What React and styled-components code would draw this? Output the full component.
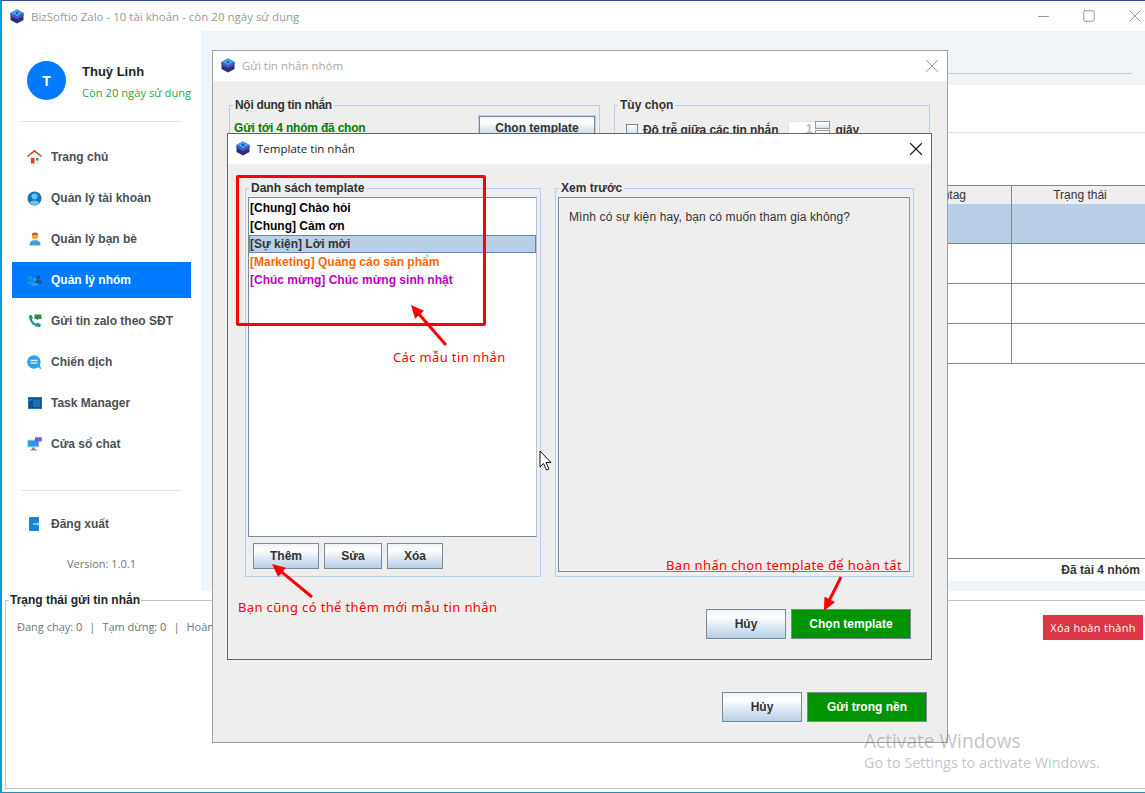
import React from 'react';
import styled, { createGlobalStyle } from 'styled-components';
import { X, Minus, Square } from 'lucide-react';

const GlobalStyle = createGlobalStyle`
  * { box-sizing: border-box; }
  html, body { margin: 0; padding: 0; background: #fff; }
  body { font-family: "Liberation Sans", Arial, sans-serif; font-size: 12px; color: #333; }
`;

const Frame = styled.div`
  position: relative;
  width: 1145px;
  height: 793px;
  overflow: hidden;
  display: flex;
  flex-direction: column;
  background: #fff;
  border-left: 2px solid #0a9be0;
  border-top: 1px solid #2b4f8f;
  border-bottom: 1px solid #2a8fa8;
`;

const TitleBar = styled.div`
  height: 30px;
  display: flex;
  align-items: center;
  padding-left: 8px;
  gap: 7px;
  flex-shrink: 0;
`;

const TitleText = styled.span`
  font-family: "Open Sans", sans-serif;
  font-size: 11.5px;
  color: ${p => p.$color || '#999'};
`;

const WindowControls = styled.div`
  margin-left: auto;
  margin-right: -13px;
  display: flex;
  align-items: center;
  color: #999;
`;

const ControlButton = styled.span`
  width: 46px;
  display: flex;
  justify-content: center;
`;

const Body = styled.div`
  height: 560px;
  display: flex;
  flex-shrink: 0;
`;

const Sidebar = styled.aside`
  width: 199px;
  flex-shrink: 0;
  display: flex;
  flex-direction: column;
  padding: 30px 10px 0 10px;
`;

const Profile = styled.div`
  display: flex;
  align-items: center;
  gap: 16px;
  padding-left: 15px;
  height: 39px;
`;

const Avatar = styled.div`
  width: 39px;
  height: 39px;
  border-radius: 50%;
  flex-shrink: 0;
  background: #007bff;
  color: #fff;
  font-weight: bold;
  font-size: 14px;
  display: flex;
  align-items: center;
  justify-content: center;
`;

const ProfileInfo = styled.div`
  display: flex;
  flex-direction: column;
  gap: 6px;
  padding-top: 3px;
`;

const ProfileName = styled.div`
  font-weight: bold;
  font-size: 13px;
  color: #212529;
`;

const ProfileNote = styled.div`
  font-family: "Open Sans", sans-serif;
  font-size: 11.2px;
  white-space: nowrap;
  color: #28a745;
`;

const Divider = styled.div`
  height: 1px;
  flex-shrink: 0;
  background: #e0e0e0;
  margin: ${p => p.$margin};
`;

const NavList = styled.nav`
  display: flex;
  flex-direction: column;
  gap: 5px;
`;

const NavItem = styled.div`
  height: 36px;
  flex-shrink: 0;
  display: flex;
  align-items: center;
  gap: 9px;
  padding-left: 15px;
  font-weight: bold;
  font-size: 12px;
  color: ${p => (p.$active ? '#fff' : '#495057')};
  background: ${p => (p.$active ? '#007bff' : 'transparent')};
`;

const IconSlot = styled.span`
  width: 15px;
  height: 16px;
  display: flex;
  align-items: center;
  justify-content: center;
  flex-shrink: 0;
`;

const Version = styled.div`
  margin-top: 14px;
  text-align: center;
  font-family: "Open Sans", sans-serif;
  font-size: 11px;
  color: #6c757d;
`;

const Content = styled.main`
  flex: 1;
  display: flex;
  flex-direction: column;
  background: #eff5f9;
`;

const TopStrip = styled.div`
  height: 54px;
  flex-shrink: 0;
  padding: 42px 13px 0 14px;
`;

const StripLine = styled.div`
  height: 1px;
  background: #c8c8c8;
`;

const ListPanel = styled.div`
  flex: 1;
  margin-left: 14px;
  display: flex;
  flex-direction: column;
  background: #fff;
`;

const Toolbar = styled.div`
  height: 48px;
  flex-shrink: 0;
  border-bottom: 1px solid #e0e0e0;
`;

const GroupTable = styled.div`
  display: grid;
  grid-template-columns: 797px 1fr;
  grid-auto-rows: 40px;
`;

const TableHead = styled(GroupTable)`
  margin-top: 52px;
  grid-auto-rows: 20px;
`;

const TableBody = styled(GroupTable)`
  margin-top: -1px;
`;

const HeaderCell = styled.div`
  height: 20px;
  background: #eee;
  border-top: 1px solid #7a8a99;
  border-bottom: 1px solid #7a8a99;
  border-right: ${p => (p.$last ? 'none' : '1px solid #7a8a99')};
  text-align: ${p => (p.$last ? 'center' : 'right')};
  padding: ${p => (p.$last ? '0 0 0 3px' : '0 45px 0 0')};
  line-height: 19px;
  color: #333;
`;

const BodyCell = styled.div`
  background: ${p => (p.$selected ? '#b8cfe5' : '#fff')};
  border-bottom: 1px solid #7a8a99;
  border-right: ${p => (p.$last ? 'none' : '1px solid #7a8a99')};
`;

const TableRow = styled.div`
  display: contents;
`;

const StatusRow = styled.div`
  margin-top: auto;
  height: 23px;
  border-top: 1px solid #7a8a99;
  display: flex;
  align-items: center;
  justify-content: flex-end;
  padding-right: 5px;
  font-weight: bold;
  color: #333;
`;

const BottomStrip = styled.div`
  height: 10px;
  flex-shrink: 0;
  background: #eff5f9;
`;

const StatusPanel = styled.fieldset`
  flex: 1;
  margin: 2px 0 3px 3px;
  padding: 7px 0 0 0;
  min-width: 0;
  border: 1px solid #c4c4c4;
  border-right: none;
  display: flex;
  flex-direction: column;
`;

const PanelLegend = styled.legend`
  padding: 0 1px;
  margin-left: 3px;
  font-weight: bold;
  font-size: 12px;
  line-height: 14px;
  color: #212529;
`;

const StatusLine = styled.div`
  display: flex;
  align-items: flex-start;
  padding: 0 2px 0 11px;
  font-family: "Open Sans", sans-serif;
  font-size: 11px;
  color: #6c757d;
`;

const StatusCounts = styled.span`
  padding-top: 5px;
  display: flex;
  gap: 7px;
`;

const DangerButton = styled.button`
  margin-left: auto;
  width: 100px;
  height: 25px;
  margin-top: 1px;
  border: none;
  background: #dc3545;
  color: #fff;
  font-family: "Open Sans", sans-serif;
  font-size: 11px;
  letter-spacing: 0.3px;
`;

const DialogWindow = styled.section`
  position: absolute;
  left: ${p => p.$left}px;
  top: ${p => p.$top}px;
  width: ${p => p.$width}px;
  height: ${p => p.$height}px;
  display: flex;
  flex-direction: column;
  background: #eee;
  border: 1px solid ${p => (p.$active ? '#666' : '#a0a0a0')};
`;

const DialogHeader = styled.header`
  height: 30px;
  flex-shrink: 0;
  background: #fff;
  display: flex;
  align-items: center;
  gap: 7px;
  padding: 0 4px 1px 8px;
`;

const CloseSlot = styled.span`
  margin-left: auto;
  display: flex;
  color: ${p => (p.$active ? '#222' : '#999')};
`;

const OuterGroups = styled.div`
  display: grid;
  grid-template-columns: 371px 316px;
  gap: 14px;
  padding: 17px 0 0 16px;
`;

const GroupBox = styled.fieldset`
  margin: 0;
  min-width: 0;
  border: 1px solid #b8cfe5;
  padding: ${p => p.$padding || '2px 3px 7px 2px'};
  display: flex;
  flex-direction: column;
`;

const GroupLegend = styled.legend`
  padding: 0 2px;
  margin-left: 1px;
  font-weight: bold;
  font-size: 12px;
  line-height: 14px;
  letter-spacing: ${p => p.$tight || 0};
  color: #333;
`;

const RecipientRow = styled.div`
  display: flex;
  align-items: center;
  justify-content: space-between;
  padding: 2px 1px 0 2px;
`;

const Recipients = styled.span`
  font-weight: bold;
  letter-spacing: -0.2px;
  color: #008000;
`;

const MetalButton = styled.button`
  width: ${p => p.$width}px;
  height: ${p => p.$height || 26}px;
  padding: 0;
  border: 1px solid #7a8a99;
  outline: ${p => (p.$focused ? '1px solid #b8cfe5' : 'none')};
  background: linear-gradient(#eef3f8 0%, #fff 25%, #dce7f2 60%, #b8cfe5 100%);
  font-family: "Liberation Sans", Arial, sans-serif;
  font-weight: bold;
  font-size: 12px;
  color: #333;
`;

const GreenButton = styled(MetalButton)`
  background: #009400;
  color: #fff;
`;

const DelayRow = styled.div`
  display: flex;
  align-items: center;
  gap: 3px;
  padding: 7px 0 0 9px;
  font-weight: bold;
  letter-spacing: -0.08px;
  color: #333;
`;

const CheckBox = styled.span`
  width: 12px;
  height: 12px;
  margin-right: 2px;
  border: 1px solid #7a8a99;
  background: linear-gradient(#fff, #c8d8e8);
`;

const Spinner = styled.span`
  width: 42px;
  height: 18px;
  margin: 0 2px 0 7px;
  display: flex;
  justify-content: flex-end;
  border: 1px solid #d8e4f0;
  background: #fff;
  color: #bbb;
`;

const SpinnerValue = styled.span`
  padding-right: 3px;
`;

const SpinnerArrows = styled.span`
  width: 15px;
  margin: -1px -1px 0 0;
  display: flex;
  flex-direction: column;
  gap: 1px;
`;

const SpinnerStep = styled.span`
  height: 9px;
  border: 1px solid #999;
  background: linear-gradient(#fff, #d8e4f0);
`;

const OuterFooter = styled.footer`
  margin-top: auto;
  padding: 0 20px 20px 0;
  display: flex;
  justify-content: flex-end;
  gap: 5px;
`;

const TemplateGroups = styled.div`
  display: grid;
  grid-template-columns: 296px 359px;
  gap: 14px;
  padding: 17px 17px 0 17px;
  height: 413px;
`;

const TemplateList = styled.ul`
  list-style: none;
  margin: 0;
  padding: 1px 0 0;
  height: 340px;
  flex-shrink: 0;
  background: #fff;
  border: 1px solid #7a8a99;
  border-right-color: #b8c4d0;
`;

const TemplateRow = styled.li`
  height: 18px;
  padding-left: 1px;
  line-height: 18px;
  font-weight: bold;
  font-size: 12px;
  color: ${p => p.$color};
  background: ${p => (p.$selected ? '#b8cfe5' : 'transparent')};
  outline: ${p => (p.$selected ? '1px solid #6382bf' : 'none')};
  outline-offset: -1px;
`;

const ListActions = styled.div`
  display: flex;
  gap: 5px;
  padding: 6px 0 0 5px;
`;

const PreviewBox = styled.div`
  flex: 1;
  margin-bottom: -3px;
  padding: 12px 10px;
  border: 1px solid #7a8a99;
  border-right-color: #8a97a4;
  font-size: 12px;
  letter-spacing: 0.12px;
  color: #333;
  line-height: 14px;
`;

const TemplateFooter = styled.footer`
  padding: 32px 20px 0 0;
  display: flex;
  justify-content: flex-end;
  gap: 5px;
`;

const RedFrame = styled.div`
  position: absolute;
  left: 234px;
  top: 174px;
  width: 250px;
  height: 151px;
  border: 3px solid #f00;
  border-radius: 2px;
`;

const Note = styled.span`
  position: absolute;
  left: ${p => p.$left}px;
  top: ${p => p.$top}px;
  font-family: "Noto Sans", sans-serif;
  font-size: 13px;
  letter-spacing: 0.36px;
  line-height: 16px;
  white-space: nowrap;
  color: #f00;
`;

const Overlay = styled.svg`
  position: absolute;
  left: -2px;
  top: -1px;
  pointer-events: none;
`;

const Watermark = styled.div`
  position: absolute;
  left: 862px;
  top: 728px;
  font-family: "Open Sans", sans-serif;
  color: rgba(110, 110, 110, 0.42);
  pointer-events: none;
`;

const WatermarkTitle = styled.div`
  font-size: 19.1px;
  line-height: 24px;
`;

const WatermarkHint = styled.div`
  font-size: 14.4px;
  line-height: 20px;
`;

const Logo = () => (
  <svg width="14" height="15" viewBox="0 0 14 15">
    <path d="M7 0.5 L13.5 4 V11 L7 14.5 L0.5 11 V4 Z" fill="#2f2a7a" />
    <path d="M7 0.5 L13.5 4 L7 7.5 L0.5 4 Z" fill="#3f9fe8" />
    <path d="M0.5 4 L7 7.5 V10 L0.5 7 Z M13.5 4 L7 7.5 V10 L13.5 7 Z" fill="#4a58c8" />
    <circle cx="7" cy="4" r="1" fill="#123a80" />
  </svg>
);

const HomeIcon = () => (
  <svg width="15" height="14" viewBox="0 0 15 14">
    <path d="M2.5 6 H12.5 V13.5 H2.5 Z" fill="#eee" />
    <path d="M4 8 H7.5 V13.5 H4 Z" fill="#d8451a" />
    <path d="M9 8 H11.5 V10.5 H9 Z" fill="#2f8fd8" />
    <path d="M0.5 6.5 L7.5 0.8 L14.5 6.5" fill="none" stroke="#c8481e" strokeWidth="1.6" />
  </svg>
);

const AccountIcon = () => (
  <svg width="15" height="15" viewBox="0 0 15 15">
    <circle cx="7.5" cy="7.5" r="7" fill="#0f74b8" />
    <circle cx="7.5" cy="5.5" r="3" fill="#6cc0ee" />
    <path d="M2.5 12 C3.5 8.5 11.5 8.5 12.5 12 C10 14.5 5 14.5 2.5 12 Z" fill="#6cc0ee" />
  </svg>
);

const FriendIcon = () => (
  <svg width="12" height="14" viewBox="0 0 12 14">
    <circle cx="6" cy="4" r="3.2" fill="#f2a33a" />
    <path d="M2.8 3.5 C3 -0.5 9 -0.5 9.2 3.5 C7.5 2 4.5 2 2.8 3.5 Z" fill="#9a5a2a" />
    <path d="M0.5 13.5 C0.5 9 3 8.2 6 8.2 C9 8.2 11.5 9 11.5 13.5 Z" fill="#36a3dc" />
  </svg>
);

const GroupIcon = () => (
  <svg width="16" height="11" viewBox="0 0 16 11">
    <circle cx="3.5" cy="2.5" r="2.2" fill="#1f8fe0" />
    <circle cx="12" cy="2.2" r="2.2" fill="#17579c" />
    <circle cx="8" cy="4.5" r="2" fill="#2a9be8" />
    <path d="M0 8 C0 4.5 6.5 4.5 6.5 8 V9 H0 Z" fill="#1f8fe0" />
    <path d="M8.5 7.5 C8.5 3.8 16 3.8 16 7.5 V9 H8.5 Z" fill="#17579c" />
    <path d="M4 11 C4 6.5 12 6.5 12 11 Z" fill="#2a9be8" />
  </svg>
);

const PhoneIcon = () => (
  <svg width="14" height="14" viewBox="0 0 14 14">
    <path d="M1 1.5 L3.5 1 L5 4 L3.8 5.3 C4.5 7.2 6 8.8 8 9.7 L9.5 8.5 L13 10.5 L12 13 C6 13.5 0.8 7.5 1 1.5 Z" fill="#0f9a92" />
    <path d="M6.5 0.5 H13.5 V5 H10.5 L9 6.5 V5 H6.5 Z" fill="#2f8f3a" />
  </svg>
);

const ChatIcon = () => (
  <svg width="15" height="15" viewBox="0 0 15 15">
    <path d="M7 0.3 A6.7 6.7 0 1 0 11 12.3 L14.5 14.5 L12.8 10.2 A6.7 6.7 0 0 0 7 0.3 Z" fill="#2ea4e8" />
    <path d="M3.5 5.5 H10.5 M3.5 8.2 H10.5" stroke="#d8f0fc" strokeWidth="1.3" />
  </svg>
);

const TaskIcon = () => (
  <svg width="14" height="12" viewBox="0 0 14 12">
    <path d="M0 0 H14 V12 H0 Z" fill="#2a6fa8" />
    <path d="M1 1 H13 V11 H1 Z" fill="#0c4f8c" />
    <path d="M5 2.5 H12 V10 H5 Z" fill="#1872b8" />
    <path d="M1.5 4 L3.5 2" stroke="#8fd0f2" strokeWidth="0.8" />
  </svg>
);

const MonitorIcon = () => (
  <svg width="15" height="14" viewBox="0 0 15 14">
    <path d="M0 2.5 H12.5 V10.5 H0 Z" fill="#d0d8e0" />
    <path d="M1 3.5 H11.5 V9.5 H1 Z" fill="#2a9be8" />
    <path d="M5 10.5 H8 V12.5 H10 V13.5 H3 V12.5 H5 Z" fill="#8a9098" />
    <path d="M8 0.3 H14.8 V4.5 H11 L9.5 6 V4.5 H8 Z" fill="#6a62c8" />
  </svg>
);

const LogoutIcon = () => (
  <svg width="11" height="14" viewBox="0 0 11 14">
    <path d="M0 0 H10 V14 H0 Z" fill="#1684dc" />
    <path d="M4 7 H9.5" stroke="#7fe0f8" strokeWidth="1.6" />
    <path d="M8.5 5 L11 7 L8.5 9 Z" fill="#7fe0f8" />
  </svg>
);

const NAV_ITEMS = [
  { label: 'Trang chủ', icon: <HomeIcon /> },
  { label: 'Quản lý tài khoản', icon: <AccountIcon /> },
  { label: 'Quản lý bạn bè', icon: <FriendIcon /> },
  { label: 'Quản lý nhóm', icon: <GroupIcon />, active: true },
  { label: 'Gửi tin zalo theo SĐT', icon: <PhoneIcon /> },
  { label: 'Chiến dịch', icon: <ChatIcon /> },
  { label: 'Task Manager', icon: <TaskIcon /> },
  { label: 'Cửa sổ chat', icon: <MonitorIcon /> },
];

const TEMPLATES = [
  { label: '[Chung] Chào hỏi', color: '#000' },
  { label: '[Chung] Cảm ơn', color: '#000' },
  { label: '[Sự kiện] Lời mời', color: '#333', selected: true },
  { label: '[Marketing] Quảng cáo sản phẩm', color: '#ff6600' },
  { label: '[Chúc mừng] Chúc mừng sinh nhật', color: '#c000c0' },
];

const ARROWS = [
  { tail: [446, 345], tip: [411, 305] },
  { tail: [312, 597], tip: [272, 564] },
  { tail: [841, 577], tip: [824, 611] },
];

function Arrow({ tail, tip }) {
  const angle = Math.atan2(tip[1] - tail[1], tip[0] - tail[0]);
  const point = (len, off) => [
    tip[0] - len * Math.cos(angle) + off * Math.sin(angle),
    tip[1] - len * Math.sin(angle) - off * Math.cos(angle),
  ];
  return (
    <g>
      <line x1={tail[0]} y1={tail[1]} x2={point(8, 0)[0]} y2={point(8, 0)[1]} stroke="#f00" strokeWidth="3" />
      <polygon points={[tip, point(13, 6), point(13, -6)].map(p => p.join(',')).join(' ')} fill="#f00" />
    </g>
  );
}

export default function App() {
  return (
    <Frame>
      <GlobalStyle />
      <TitleBar>
        <Logo />
        <TitleText>BizSoftio Zalo - 10 tài khoản - còn 20 ngày sử dụng</TitleText>
        <WindowControls>
          <ControlButton><Minus size={17} strokeWidth={1} absoluteStrokeWidth /></ControlButton>
          <ControlButton><Square size={14} strokeWidth={1} absoluteStrokeWidth /></ControlButton>
          <ControlButton><X size={20} strokeWidth={1} absoluteStrokeWidth /></ControlButton>
        </WindowControls>
      </TitleBar>

      <Body>
        <Sidebar>
          <Profile>
            <Avatar>T</Avatar>
            <ProfileInfo>
              <ProfileName>Thuỳ Linh</ProfileName>
              <ProfileNote>Còn 20 ngày sử dụng</ProfileNote>
            </ProfileInfo>
          </Profile>
          <Divider $margin="21px 10px 17px 9px" />
          <NavList>
            {NAV_ITEMS.map(item => (
              <NavItem key={item.label} $active={item.active}>
                <IconSlot>{item.icon}</IconSlot>
                {item.label}
              </NavItem>
            ))}
          </NavList>
          <Divider $margin="28px 10px 15px 9px" />
          <NavItem>
            <IconSlot><LogoutIcon /></IconSlot>
            Đăng xuất
          </NavItem>
          <Version>Version: 1.0.1</Version>
        </Sidebar>

        <Content>
          <TopStrip><StripLine /></TopStrip>
          <ListPanel>
            <Toolbar />
            <TableHead>
              <HeaderCell>Hashtag</HeaderCell>
              <HeaderCell $last>Trạng thái</HeaderCell>
            </TableHead>
            <TableBody>
              {[true, false, false, false].map((selected, i) => (
                <TableRow key={i}>
                  <BodyCell $selected={selected} />
                  <BodyCell $selected={selected} $last />
                </TableRow>
              ))}
            </TableBody>
            <StatusRow>Đã tải 4 nhóm</StatusRow>
          </ListPanel>
          <BottomStrip />
        </Content>
      </Body>

      <StatusPanel>
        <PanelLegend>Trạng thái gửi tin nhắn</PanelLegend>
        <StatusLine>
          <StatusCounts>
            <span>Đang chạy: 0</span>
            <span>|</span>
            <span>Tạm dừng: 0</span>
            <span>|</span>
            <span>Hoàn thành: 0</span>
          </StatusCounts>
          <DangerButton>Xóa hoàn thành</DangerButton>
        </StatusLine>
      </StatusPanel>

      <DialogWindow $left={210} $top={49} $width={736} $height={693}>
        <DialogHeader>
          <Logo />
          <TitleText $color="#aaa">Gửi tin nhắn nhóm</TitleText>
          <CloseSlot><X size={22} strokeWidth={1} absoluteStrokeWidth /></CloseSlot>
        </DialogHeader>
        <OuterGroups>
          <GroupBox>
            <GroupLegend $tight="-0.3px">Nội dung tin nhắn</GroupLegend>
            <RecipientRow>
              <Recipients>Gửi tới 4 nhóm đã chọn</Recipients>
              <MetalButton $width={116} $height={23} $focused>Chọn template</MetalButton>
            </RecipientRow>
          </GroupBox>
          <GroupBox>
            <GroupLegend>Tùy chọn</GroupLegend>
            <DelayRow>
              <CheckBox />
              Độ trễ giữa các tin nhắn
              <Spinner>
                <SpinnerValue>1</SpinnerValue>
                <SpinnerArrows>
                  <SpinnerStep />
                  <SpinnerStep />
                </SpinnerArrows>
              </Spinner>
              giây
            </DelayRow>
          </GroupBox>
        </OuterGroups>
        <OuterFooter>
          <MetalButton $width={80} $height={30}>Hủy</MetalButton>
          <GreenButton $width={120} $height={30}>Gửi trong nền</GreenButton>
        </OuterFooter>
      </DialogWindow>

      <DialogWindow $active $left={225} $top={132} $width={705} $height={527}>
        <DialogHeader>
          <Logo />
          <TitleText $color="#222">Template tin nhắn</TitleText>
          <CloseSlot $active><X size={22} strokeWidth={1.2} absoluteStrokeWidth /></CloseSlot>
        </DialogHeader>
        <TemplateGroups>
          <GroupBox>
            <GroupLegend>Danh sách template</GroupLegend>
            <TemplateList>
              {TEMPLATES.map(t => (
                <TemplateRow key={t.label} $color={t.color} $selected={t.selected}>{t.label}</TemplateRow>
              ))}
            </TemplateList>
            <ListActions>
              <MetalButton $width={66}>Thêm</MetalButton>
              <MetalButton $width={58}>Sửa</MetalButton>
              <MetalButton $width={56}>Xóa</MetalButton>
            </ListActions>
          </GroupBox>
          <GroupBox>
            <GroupLegend>Xem trước</GroupLegend>
            <PreviewBox>Mình có sự kiện hay, bạn có muốn tham gia không?</PreviewBox>
          </GroupBox>
        </TemplateGroups>
        <TemplateFooter>
          <MetalButton $width={80} $height={30}>Hủy</MetalButton>
          <GreenButton $width={120} $height={30}>Chọn template</GreenButton>
        </TemplateFooter>
      </DialogWindow>

      <RedFrame />
      <Note $left={391} $top={348}>Các mẫu tin nhắn</Note>
      <Note $left={236} $top={598}>Bạn cũng có thể thêm mới mẫu tin nhắn</Note>
      <Note $left={664} $top={556}>Bạn nhấn chọn template để hoàn tất</Note>

      <Overlay width="1145" height="793" viewBox="0 0 1145 793">
        {ARROWS.map((a, i) => <Arrow key={i} tail={a.tail} tip={a.tip} />)}
        <path d="M540 451 V467 L543.5 463.5 L546.5 470 L549 469 L546 462.5 L551 462.5 Z" fill="#fff" stroke="#111" strokeWidth="1" />
      </Overlay>

      <Watermark>
        <WatermarkTitle>Activate Windows</WatermarkTitle>
        <WatermarkHint>Go to Settings to activate Windows.</WatermarkHint>
      </Watermark>
    </Frame>
  );
}
